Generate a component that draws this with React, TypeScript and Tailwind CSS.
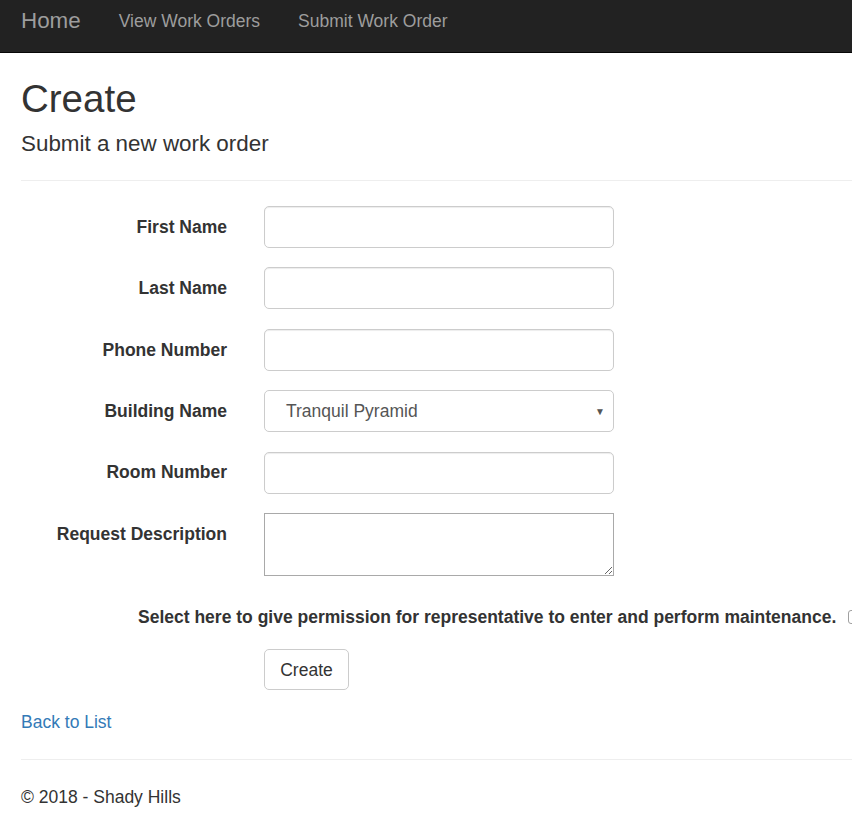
import React from 'react';

const fields = [
    { label: 'First Name', type: 'text' },
    { label: 'Last Name', type: 'text' },
    { label: 'Phone Number', type: 'text' },
    { label: 'Building Name', type: 'select' },
    { label: 'Room Number', type: 'text' },
];

function Navbar() {
    return (
        <nav className="flex h-[53px] items-start border-b border-[#080808] bg-[#222] pl-[21px]">
            <a className="mt-[7px] text-[22.4px] leading-[28px] text-[#9d9d9d]">Home</a>
            <a className="ml-[38px] mt-[9px] text-[17.5px] leading-[24px] text-[#9d9d9d]">View Work Orders</a>
            <a className="ml-[38px] mt-[9px] text-[17.5px] leading-[24px] text-[#9d9d9d]">Submit Work Order</a>
        </nav>
    );
}

export default function App() {
    return (
        <div className="min-h-[815px] w-full overflow-hidden bg-white font-['Liberation_Sans',Arial,sans-serif] text-[17.5px] text-[#333]">
            <Navbar />

            <div className="pl-[21px]">
                {/* Heading */}
                <h1 className="mt-[22px] text-[38.5px] leading-[47px]">Create</h1>
                <h4 className="mt-[9px] text-[22.4px] leading-[26px]">Submit a new work order</h4>
                <hr className="mt-[23px] border-t border-[#eee]" />

                {/* Form */}
                <form className="mt-[25px]">
                    {fields.map((f) => (
                        <div key={f.label} className="mb-[19.4px] flex">
                            <label className="flex h-[42px] w-[206px] items-center justify-end font-bold">{f.label}</label>
                            {f.type === 'select' ? (
                                <div className="relative ml-[37px] flex h-[42px] w-[350px] items-center rounded-[5px] border border-[#ccc] pl-[21px] text-[#555]">
                                    Tranquil Pyramid
                                    <span className="absolute right-[8px] top-[13px] text-[10px] text-[#555]">▼</span>
                                </div>
                            ) : (
                                <input
                                    type="text"
                                    className="ml-[37px] h-[42px] w-[350px] rounded-[5px] border border-[#ccc] px-[14px] shadow-[inset_0_1px_1px_rgba(0,0,0,0.075)]"
                                />
                            )}
                        </div>
                    ))}

                    <div className="flex">
                        <label className="flex h-[42px] w-[206px] items-center justify-end font-bold">Request Description</label>
                        <textarea className="ml-[37px] h-[63px] w-[350px] border border-[#a9a9a9]" />
                    </div>

                    <div className="mt-[28px] flex items-center whitespace-nowrap pl-[117px]">
                        <span className="font-bold">Select here to give permission for representative to enter and perform maintenance.</span>
                        <span className="ml-[12px] inline-block h-[14px] w-[14px] shrink-0 rounded-[3px] border border-[#a0a0a0] bg-white" />
                    </div>

                    <button
                        type="button"
                        className="ml-[243px] mt-[19px] flex h-[41px] w-[85px] items-center justify-center rounded-[5px] border border-[#ccc] bg-white text-[#333]"
                    >
                        Create
                    </button>
                </form>

                <a className="mt-[20px] block text-[#337ab7] leading-[24px]">Back to List</a>

                <hr className="mt-[25px] border-t border-[#eee]" />
                <footer className="mt-[25px] leading-[24px]">© 2018 - Shady Hills</footer>
            </div>
        </div>
    );
}
